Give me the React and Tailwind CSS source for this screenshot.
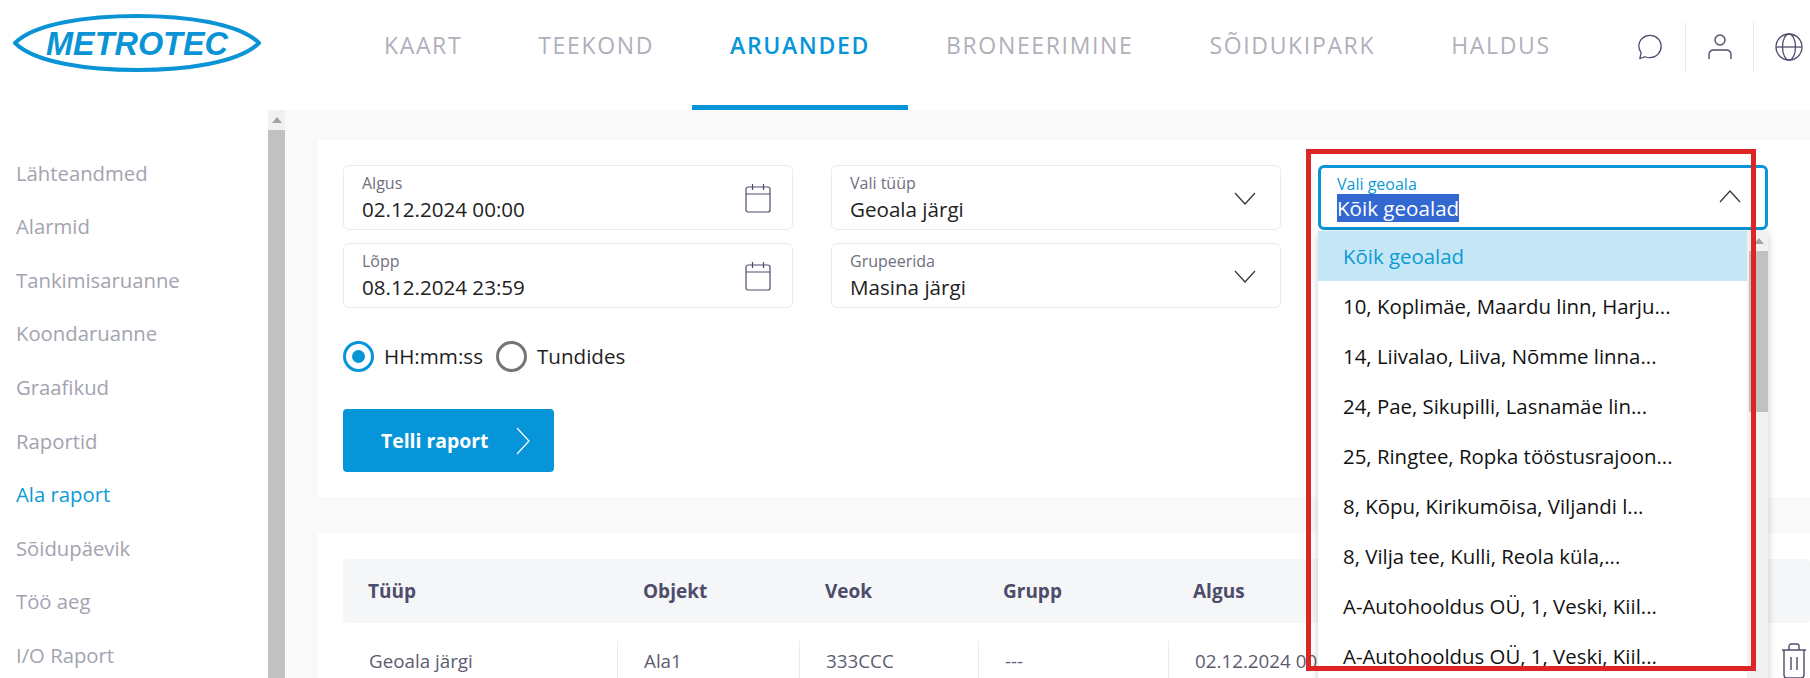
import React from 'react';

const font = { fontFamily: '"Open Sans", sans-serif' };

const navItems = ['KAART', 'TEEKOND', 'ARUANDED', 'BRONEERIMINE', 'SÕIDUKIPARK', 'HALDUS'];
const sideItems = ['Lähteandmed', 'Alarmid', 'Tankimisaruanne', 'Koondaruanne', 'Graafikud', 'Raportid', 'Ala raport', 'Sõidupäevik', 'Töö aeg', 'I/O Raport'];
const geoItems = [
  'Kõik geoalad',
  '10, Koplimäe, Maardu linn, Harju...',
  '14, Liivalao, Liiva, Nõmme linna...',
  '24, Pae, Sikupilli, Lasnamäe lin...',
  '25, Ringtee, Ropka tööstusrajoon...',
  '8, Kõpu, Kirikumõisa, Viljandi l...',
  '8, Vilja tee, Kulli, Reola küla,...',
  'A-Autohooldus OÜ, 1, Veski, Kiil...',
  'A-Autohooldus OÜ, 1, Veski, Kiil...',
];

function Logo() {
  return (
    <svg width="248" height="60" viewBox="0 0 248 60">
      <path d="M2 30 C22 10 76 3 124 3 C172 3 226 10 246 30 C226 50 172 57 124 57 C76 57 22 50 2 30 Z" fill="#fff" stroke="#0a94d6" strokeWidth="4" />
      <text x="124" y="42" textAnchor="middle" textLength="182" lengthAdjust="spacingAndGlyphs" fill="#0a94d6" fontFamily="Liberation Sans" fontWeight="700" fontStyle="italic" fontSize="33">METROTEC</text>
    </svg>
  );
}

function CalendarIcon() {
  return (
    <svg width="26" height="30" viewBox="0 0 26 30" fill="none" stroke="#4d4d6b" strokeWidth="1.2">
      <rect x="1" y="4" width="24" height="25" rx="2" />
      <path d="M1 11H25M7.5 1V7M18.5 1V7" />
    </svg>
  );
}

function Chevron({ up }) {
  return (
    <svg className={up ? 'mr-[4px] mb-[3px]' : 'mr-[3px] mt-[3px]'} width="22" height="14" viewBox="0 0 22 14" fill="none" stroke="#333" strokeWidth="1.2">
      <path d={up ? 'M1 13L11 2L21 13' : 'M1 1L11 12L21 1'} />
    </svg>
  );
}

function Field({ label, value, icon }) {
  return (
    <div className="flex h-[65px] items-center justify-between rounded-md border border-[#ebebef] bg-white pl-[18px] pr-[21px]">
      <div className="flex flex-col gap-[2px]">
        <span className="text-[16px] leading-[20px] text-[#6f6f80]">{label}</span>
        <span className="text-[20.6px] leading-[28px] text-[#222]">{value}</span>
      </div>
      {icon}
    </div>
  );
}

function Radio({ checked, label }) {
  return (
    <div className="flex items-center gap-[10px]">
      <span className={`flex h-[31px] w-[31px] items-center justify-center rounded-full border-[3px] ${checked ? 'border-[#0795d9]' : 'border-[#757575]'}`}>
        {checked && <span className="h-[13px] w-[13px] rounded-full bg-[#0795d9]" />}
      </span>
      <span className="text-[20.6px] text-[#222]">{label}</span>
    </div>
  );
}

function App() {
  return (
    <div className="relative h-[678px] w-[1810px] overflow-hidden bg-[#f9f9f9]" style={font}>
      {/* header */}
      <header className="flex h-[110px] items-start bg-white">
        <div className="ml-[13px] mt-[13px] w-[333px] shrink-0">
          <Logo />
        </div>
        <nav className="flex h-[110px]">
          {navItems.map((item) => (
            <a
              key={item}
              className={`flex h-[110px] items-center px-[38px] text-[23px] tracking-[1.65px] ${
                item === 'ARUANDED' ? 'border-b-[5px] border-[#0795d9] pb-[15px] font-semibold text-[#0795d9]' : 'pb-[20px] text-[#b0b0ba]'
              }`}
            >
              {item}
            </a>
          ))}
        </nav>
        <div className="ml-auto flex h-[50px] mt-[22px] items-center text-[#4d4d6b]">
          <div className="flex w-[50px] justify-start pl-[2px]">
            <svg width="26" height="26" viewBox="0 0 26 28" fill="none" stroke="#4d4d6b" strokeWidth="1.4">
              <path d="M2 26.5 L3.5 20 C1.5 17.5 1 15 1 13 C1 6.5 6.5 1.5 13 1.5 C19.5 1.5 25 6.5 25 13.5 C25 20 19.5 25.5 13 25.5 C11 25.5 9 25 7.5 24.5 Z" strokeLinejoin="round" />
            </svg>
          </div>
          <div className="h-[50px] w-px bg-[#ebebef]" />
          <div className="flex w-[67px] justify-center">
            <svg width="24" height="26" viewBox="0 0 24 26" fill="none" stroke="#4d4d6b" strokeWidth="1.4">
              <circle cx="12" cy="6" r="5" />
              <path d="M1 25V21C1 18 3 16 6 16H18C21 16 23 18 23 21V25" />
            </svg>
          </div>
          <div className="h-[50px] w-px bg-[#ebebef]" />
          <div className="flex w-[56px] justify-start pl-[21px]">
            <svg width="28" height="28" viewBox="0 0 28 28" fill="none" stroke="#4d4d6b" strokeWidth="1.3">
              <circle cx="14" cy="14" r="13" />
              <ellipse cx="14" cy="14" rx="6.5" ry="13" />
              <path d="M1 14H27" />
            </svg>
          </div>
        </div>
      </header>

      <div className="flex h-[568px]">
        {/* sidebar */}
        <aside className="flex h-full w-[268px] shrink-0 flex-col bg-white pl-4 pt-[36px]">
          {sideItems.map((item) => (
            <div key={item} className={`flex h-[53.6px] shrink-0 items-center text-[20.3px] ${item === 'Ala raport' ? 'text-[#0a9ad6]' : 'text-[#a3a3b0]'}`}>
              {item}
            </div>
          ))}
        </aside>
        <div className="flex h-full w-[17px] shrink-0 flex-col bg-[#f1f1f1]">
          <div className="flex h-[20px] items-center justify-center">
            <div className="h-0 w-0 border-x-[5px] border-b-[6px] border-x-transparent border-b-[#a3a3a3]" />
          </div>
          <div className="flex-1 bg-[#c1c1c1]" />
        </div>

        {/* main */}
        <main className="flex min-w-0 flex-1 flex-col pl-[33px] pt-[30px]">
          <section className="h-[357px] shrink-0 bg-white pl-[25px] pt-[25px]">
            <div className="grid w-[1425px] grid-cols-[450px_450px_449px] gap-x-[38px] gap-y-[13px]">
              <Field label="Algus" value="02.12.2024 00:00" icon={<CalendarIcon />} />
              <Field label="Vali tüüp" value="Geoala järgi" icon={<Chevron />} />
              <div className="row-span-2" />
              <Field label="Lõpp" value="08.12.2024 23:59" icon={<CalendarIcon />} />
              <Field label="Grupeerida" value="Masina järgi" icon={<Chevron />} />
            </div>
            <div className="mt-[33px] flex items-center gap-[13px]">
              <Radio checked label="HH:mm:ss" />
              <Radio label="Tundides" />
            </div>
            <button className="mt-[37px] flex h-[63px] w-[211px] items-center rounded bg-[#0795d9] pl-[38px] text-[19.4px] font-bold text-white">
              Telli raport
              <svg className="ml-[27px]" width="14" height="28" viewBox="0 0 14 28" fill="none" stroke="#fff" strokeWidth="1.2">
                <path d="M1 1L13 14L1 27" />
              </svg>
            </button>
          </section>

          <section className="mt-[36px] flex-1 bg-white pl-[25px] pt-[26px]">
            <div className="flex h-[64px] items-center rounded bg-[#f4f6f8] text-[19px] font-bold text-[#4d4d6b]">
              <div className="w-[300px] pl-[25px]">Tüüp</div>
              <div className="w-[182px]">Objekt</div>
              <div className="w-[178px]">Veok</div>
              <div className="w-[190px]">Grupp</div>
              <div>Algus</div>
            </div>
            <div className="mt-[18px] flex h-[40px] items-center text-[18.8px] text-[#5c5c70]">
              <div className="w-[274px] pl-[26px]">Geoala järgi</div>
              <div className="h-full w-[182px] border-l border-[#ebebef] pl-[26px] leading-[40px]">Ala1</div>
              <div className="h-full w-[179px] border-l border-[#ebebef] pl-[26px] leading-[40px]">333CCC</div>
              <div className="h-full w-[190px] border-l border-[#ebebef] pl-[26px] leading-[40px]">---</div>
              <div className="h-full w-[300px] border-l border-[#ebebef] pl-[26px] leading-[40px] whitespace-nowrap">02.12.2024 00:00</div>
              <svg className="ml-[313px] shrink-0" width="26" height="36" viewBox="0 0 26 36" fill="none" stroke="#4d4d6b" strokeWidth="1.4">
                <path d="M1 7H25M8 7V3C8 2 9 1 10 1H16C17 1 18 2 18 3V7M3 7V32C3 34 4 35 6 35H20C22 35 23 34 23 32V7M10 14V27M16 14V27" />
              </svg>
            </div>
          </section>
        </main>
      </div>

      {/* open geoala dropdown */}
      <div className="absolute left-[1318px] top-[165px] w-[450px]">
        <div className="flex h-[65px] items-center justify-between rounded-md border-[3px] border-[#0795d9] bg-white pl-[16px] pr-[20px]">
          <div className="flex flex-col items-start">
            <span className="text-[16px] leading-[20px] text-[#0a9ad6]">Vali geoala</span>
            <span className="bg-[#3367d1] text-[20.6px] leading-[28px] text-white">Kõik geoalad</span>
          </div>
          <Chevron up />
        </div>
        <div className="mt-[1px] flex h-[500px] overflow-hidden bg-white shadow-[0_2px_8px_rgba(0,0,0,0.2)]">
          <ul className="flex-1 text-[20.4px] text-[#111]">
            {geoItems.map((item, i) => (
              <li key={i} className={`flex h-[50px] items-center pl-[25px] ${i === 0 ? 'bg-[#c4e6f5] text-[#0a9ad6]' : ''}`}>
                {item}
              </li>
            ))}
          </ul>
          <div className="flex w-[21px] shrink-0 flex-col items-center bg-[#f1f1f1] pl-[2px]">
            <div className="flex h-[20px] items-center">
              <div className="h-0 w-0 border-x-[5px] border-b-[6px] border-x-transparent border-b-[#a3a3a3]" />
            </div>
            <div className="h-[161px] w-full bg-[#c1c1c1]" />
          </div>
        </div>
      </div>

      {/* red annotation frame */}
      <div className="absolute left-[1306px] top-[149px] h-[522px] w-[450px] border-[5px] border-[#dd2525]" />
    </div>
  );
}

export default App;
